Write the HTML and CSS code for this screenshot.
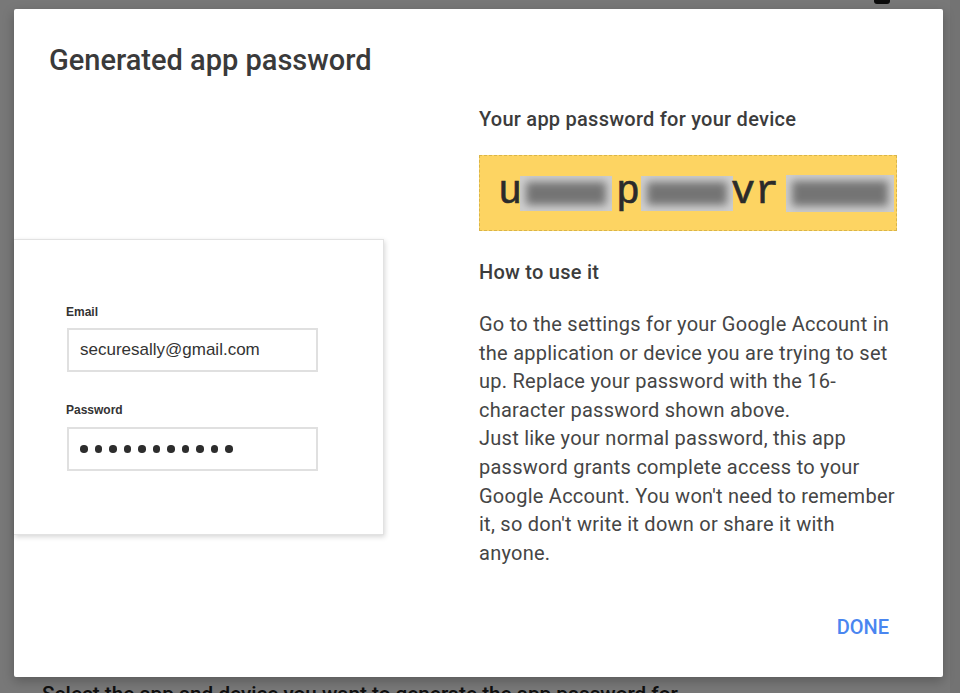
FILE: index.html
```html
<!DOCTYPE html>
<html lang="en">
<head>
<meta charset="utf-8">
<title>Generated app password</title>
<link rel="stylesheet" href="styles.css">
</head>
<body>
<div class="page">
  <div class="page-icon"></div>
  <p class="page-text">Select the app and device you want to generate the app password for.</p>
</div>
<div class="scrim"></div>
<div class="dialog" role="dialog">
  <h1 class="dialog-title">Generated app password</h1>
  <div class="dialog-body">
    <div class="preview">
      <div class="field">
        <div class="field-label">Email</div>
        <div class="field-input">securesally@gmail.com</div>
      </div>
      <div class="field">
        <div class="field-label">Password</div>
        <div class="field-input dots">
          <span class="dot"></span><span class="dot"></span><span class="dot"></span><span class="dot"></span><span class="dot"></span><span class="dot"></span><span class="dot"></span><span class="dot"></span><span class="dot"></span><span class="dot"></span><span class="dot"></span>
        </div>
      </div>
    </div>
    <div class="info">
      <h2 class="info-title">Your app password for your device</h2>
      <div class="pw-box">
        <span class="ch">u</span><span class="blur b1"></span><span class="ch">p</span><span class="blur b2"></span><span class="ch">vr</span><span class="blur b3"></span>
      </div>
      <h2 class="info-title how">How to use it</h2>
      <p class="info-text">Go to the settings for your Google Account in the application or device you are trying to set up. Replace your password with the 16-character password shown above.<br>Just like your normal password, this app password grants complete access to your Google Account. You won't need to remember it, so don't write it down or share it with anyone.</p>
    </div>
  </div>
  <div class="dialog-actions">
    <button class="btn-done" type="button">DONE</button>
  </div>
</div>
</body>
</html>
```
FILE: styles.css
```css
html, body {
  margin: 0;
  padding: 0;
}
body {
  width: 960px;
  height: 693px;
  overflow: hidden;
  background: #fff;
  font-family: Roboto, "Liberation Sans", Arial, sans-serif;
  position: relative;
}
.page {
  height: 693px;
  padding: 0 42px;
  box-sizing: border-box;
  display: flex;
  flex-direction: column;
  justify-content: space-between;
}
.page-icon {
  align-self: flex-end;
  width: 16px;
  height: 4px;
  margin-right: 28px;
  background: #1a1a1a;
  border-radius: 0 0 3px 3px;
}
.page-text {
  margin: 0 0 -15px;
  font-size: 20.7px;
  line-height: 28px;
  font-weight: 500;
  color: #222;
  white-space: nowrap;
}
.scrim {
  position: absolute;
  inset: 0;
  background: rgba(0, 0, 0, 0.53);
  border-right: 10px solid rgba(0, 0, 0, 0.04);
}
.dialog {
  position: absolute;
  left: 14px;
  top: 9px;
  width: 929px;
  height: 668px;
  background: #fff;
  border-radius: 2px;
  box-shadow: 0 4px 12px rgba(0, 0, 0, 0.25);
  display: flex;
  flex-direction: column;
}
.dialog-title {
  margin: 35px 0 0 35px;
  font-size: 29px;
  line-height: 32px;
  font-weight: 500;
  color: #3a3a3a;
}
.dialog-body {
  display: flex;
  align-items: flex-start;
  gap: 95px;
  margin-top: 31px;
}
.preview {
  width: 370px;
  height: 296px;
  margin-top: 132px;
  box-sizing: border-box;
  padding: 64px 0 0 52px;
  background: #fff;
  border: 1px solid #e2e2e2;
  border-left: none;
  box-shadow: 1px 2px 5px rgba(0, 0, 0, 0.16);
}
.field + .field {
  margin-top: 30px;
}
.field-label {
  font-family: "Liberation Sans", Arial, sans-serif;
  font-weight: 700;
  font-size: 12px;
  line-height: 16px;
  color: #333;
  margin-bottom: 8px;
}
.field:last-child .field-label {
  margin-bottom: 9px;
}
.field-input {
  width: 251px;
  height: 44px;
  margin-left: 1px;
  box-sizing: border-box;
  border: 2px solid #e0e0e0;
  padding: 0 0 0 11px;
  display: flex;
  align-items: center;
  font-family: "Liberation Sans", Arial, sans-serif;
  font-size: 17px;
  color: #333;
}
.dots {
  gap: 7px;
}
.dot {
  width: 7.5px;
  height: 7.5px;
  border-radius: 50%;
  background: #2d2d2d;
}
.info {
  width: 418px;
}
.info-title {
  margin: 0;
  font-size: 20px;
  line-height: 24px;
  font-weight: 500;
  letter-spacing: 0.25px;
  color: #3c3c3c;
}
.pw-box {
  margin-top: 24px;
  height: 76px;
  box-sizing: border-box;
  background: #fdd462;
  border: 1px dashed #d9b54a;
  display: flex;
  align-items: center;
  padding-left: 18px;
  font-family: "Liberation Mono", "Courier New", monospace;
  font-size: 40px;
  color: #2b2b2b;
  -webkit-text-stroke: 0.6px #2b2b2b;
}
.ch {
  line-height: 1;
}
.blur {
  display: block;
  height: 35px;
  background: #747474;
  box-shadow: inset 0 0 8px 6px #d0d0d0;
}
.b1 {
  width: 92px;
  margin: 0 4px 0 -2px;
}
.b2 {
  width: 92px;
  margin: 0 -2px 0 1px;
}
.b3 {
  width: 108px;
  height: 37px;
  margin-left: 7px;
}
.how {
  margin-top: 29px;
}
.info-text {
  margin: 26px 0 0;
  font-size: 20px;
  line-height: 28.6px;
  letter-spacing: 0.25px;
  color: #454545;
}
.dialog-actions {
  margin-top: auto;
  display: flex;
  justify-content: flex-end;
  padding: 0 54px 36px 0;
}
.btn-done {
  background: none;
  border: none;
  padding: 0;
  font-family: Roboto, "Liberation Sans", Arial, sans-serif;
  font-size: 20px;
  line-height: 28px;
  font-weight: 500;
  color: #4a86f0;
}
```
